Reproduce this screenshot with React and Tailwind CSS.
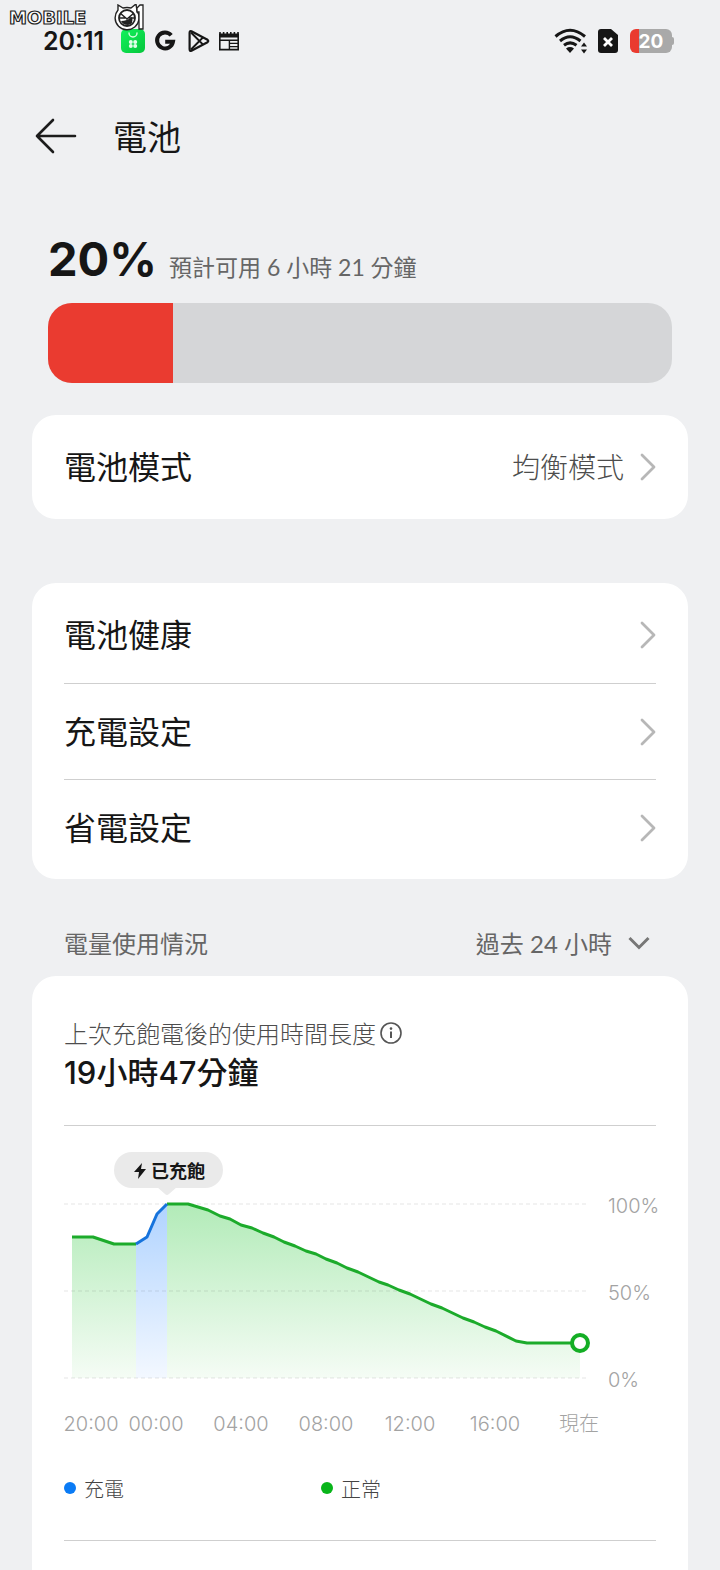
import React from 'react';

const settingsRows = ['電池健康', '充電設定', '省電設定'];

const normalBefore = [[8, 111], [29, 111], [50, 118], [72, 118]];
const charging = [[72, 118], [83, 111], [93, 88], [103, 78]];
const normalAfter = [
  [103, 78], [124, 78], [144, 84], [156, 90], [166, 93], [177, 99], [188, 102], [199, 107],
  [210, 111], [220, 116], [231, 120], [242, 125], [252, 128], [262, 133], [273, 137], [283, 142],
  [294, 146], [315, 156], [324, 159], [335, 164], [346, 168], [367, 178], [378, 182], [399, 192],
  [410, 196], [421, 201], [432, 205], [452, 215], [463, 217], [516, 217],
];

const levels = [
  { label: '100%', y: 78 },
  { label: '50%', y: 165 },
  { label: '0%', y: 252 },
];

const times = [
  { label: '20:00', x: 27 },
  { label: '00:00', x: 92 },
  { label: '04:00', x: 177 },
  { label: '08:00', x: 262 },
  { label: '12:00', x: 346 },
  { label: '16:00', x: 431 },
  { label: '現在', x: 515 },
];

const toLine = (points) => points.map((p) => p.join(',')).join(' ');
const toArea = (points) =>
  `${points[0][0]},252 ${toLine(points)} ${points[points.length - 1][0]},252`;

const Watermark = () => (
  <svg className="absolute left-2 top-1 w-[138px] h-7" viewBox="0 0 138 28">
    <text x="1" y="20" fontSize="18" fontWeight="700" fontFamily="DejaVu Sans" fill="#fff" stroke="#222" strokeWidth="1.2">
      MOBILE
    </text>
    {/* Cat face used as the zero */}
    <path d="M110 6L110 1L115 4Q119 3 123 4L128 0L129 7A12 12 0 1 1 110 6Z" fill="#fff" stroke="#222" strokeWidth="1.4" />
    <circle cx="119" cy="14" r="8" fill="#fff" stroke="#222" strokeWidth="1.8" />
    <path d="M112 9L119 15L126 9M112 14L117 14M121 14L126 14" fill="none" stroke="#222" strokeWidth="1.5" />
    <path d="M113 17Q119 17 124 13Q126 20 120 21Q115 21 113 17Z" fill="#222" />
    <path d="M129 4L132 1H135V25H131V8H129Z" fill="#fff" stroke="#222" strokeWidth="1.3" />
  </svg>
);

const StatusBar = () => (
  <div className="pt-6 h-[58px] pl-[11px] pr-[14px] flex items-center justify-between">
    <div className="flex items-center">
      <span className="text-[25px] leading-none font-semibold">20:11</span>
      <svg className="ml-[17px] w-6 h-6" viewBox="0 0 24 24">
        <defs>
          <linearGradient id="app" x1="0" y1="0" x2="1" y2="1">
            <stop offset="0" stopColor="#12f25c" />
            <stop offset="1" stopColor="#06c63c" />
          </linearGradient>
        </defs>
        <rect width="24" height="24" rx="5" fill="url(#app)" />
        <path d="M8 4a4 4 0 0 0 8 0" fill="none" stroke="#d4ffe0" strokeWidth="1.4" strokeLinecap="round" />
        <g fill="#e2ffea">
          <circle cx="9.8" cy="13" r="2" />
          <circle cx="14.2" cy="13" r="2" />
          <circle cx="9.8" cy="17" r="2" />
          <circle cx="14.2" cy="17" r="2" />
        </g>
      </svg>
      <svg className="ml-[9px] w-[22px] h-[22px]" viewBox="0 0 22 22" fill="none" stroke="#161616" strokeWidth="4">
        <path d="M17.2 5.2A8 8 0 1 0 19 11.7H11.2" />
      </svg>
      <svg className="ml-3 w-[22px] h-6" viewBox="0 0 22 24" fill="none" stroke="#161616" strokeWidth="2.2" strokeLinejoin="round">
        <path d="M3.4 2.2Q1.6 1.6 1.6 4V20Q1.6 22.4 3.4 21.8L19.5 13.2Q21 12 19.5 10.8Z" />
        <path d="M3 3.5L14.8 15.4M3 20.5L14.8 8.6" strokeWidth="2" />
      </svg>
      <svg className="ml-2 w-[22px] h-[22px]" viewBox="0 0 22 22" fill="none" stroke="#161616">
        <path d="M1.8 4V19.6H20.2V4" strokeWidth="1.6" />
        <path d="M1 5.5H21" strokeWidth="4" />
        <path d="M2 2V4M5.6 2V4M9.2 2V4M12.8 2V4M16.4 2V4M20 2V4" strokeWidth="1.6" />
        <path d="M2 10.2H20M12 13.4H20M12 16.6H20" strokeWidth="1.4" />
        <path d="M11.4 10V19" strokeWidth="1.4" />
      </svg>
    </div>
    <div className="flex items-center">
      <svg className="w-[34px] h-[26px]" viewBox="0 0 34 26" fill="none" stroke="#161616" strokeWidth="3">
        <path d="M1.5 8.5Q16 -4 31 8.5" />
        <path d="M6 13Q16 4.5 26.5 13" />
        <path d="M10 17.2Q16 12.5 22.5 17.2" />
        <path d="M12 20.5Q16 17.6 20 20.5L16 25Z" fill="#161616" stroke="none" />
        <path d="M27 18.5L30 14.5L33 18.5ZM27 21.5L30 25.5L33 21.5Z" fill="#161616" stroke="none" />
      </svg>
      <svg className="ml-[10px] w-5 h-6" viewBox="0 0 20 24">
        <path d="M3 0H13L20 6V21Q20 24 17 24H3Q0 24 0 21V3Q0 0 3 0Z" fill="#161616" />
        <path d="M6 9L14 17M14 9L6 17" stroke="#fff" strokeWidth="2.8" />
      </svg>
      <div className="ml-3 flex items-center">
        <div className="w-[42px] h-6 rounded-md overflow-hidden bg-[linear-gradient(90deg,#ea3b30_9px,#a9a9a9_9px)] flex items-center justify-center">
          <span className="text-[19px] leading-none font-bold text-white">20</span>
        </div>
        <div className="w-0.5 h-2 rounded-r-sm bg-[#a9a9a9]" />
      </div>
    </div>
  </div>
);

const Chevron = () => (
  <svg className="w-4 h-7 shrink-0" viewBox="0 0 16 28" fill="none" stroke="#b7b7b7" strokeWidth="2.8" strokeLinecap="round" strokeLinejoin="round">
    <path d="M2 2L14 14L2 26" />
  </svg>
);

const SettingRow = ({ label, value }) => (
  <button type="button" className="w-full h-24 flex items-center justify-between text-left border-[#cfcfcf] not-first:border-t">
    <span className="pt-0.5 text-[32px] leading-10">{label}</span>
    <span className="flex items-center gap-4">
      {value && <span className="pt-0.5 text-[28px] leading-9 font-light text-[#4d4d4d]">{value}</span>}
      <Chevron />
    </span>
  </button>
);

const BatteryChart = () => (
  <svg className="w-full h-auto overflow-visible" viewBox="0 0 592 314" fill="none">
    <defs>
      <linearGradient id="green" gradientUnits="userSpaceOnUse" x1="0" y1="78" x2="0" y2="252">
        <stop offset="0" stopColor="#b2ebb8" />
        <stop offset="1" stopColor="#f5fcf5" />
      </linearGradient>
      <linearGradient id="blue" gradientUnits="userSpaceOnUse" x1="0" y1="78" x2="0" y2="252">
        <stop offset="0" stopColor="#b0d3ff" />
        <stop offset="1" stopColor="#f3f8ff" />
      </linearGradient>
    </defs>

    <polygon points={toArea(normalBefore)} fill="url(#green)" />
    <polygon points={toArea(normalAfter)} fill="url(#green)" />
    <polygon points={toArea(charging)} fill="url(#blue)" />

    {levels.map(({ label, y }) => (
      <g key={label}>
        <path d={`M0 ${y}H523`} stroke="#000" strokeOpacity="0.07" strokeWidth="1.5" strokeDasharray="4 3" />
        <text x="544" y={y + 9} fontSize="20" fontWeight="300" fill="#a3a3a3">{label}</text>
      </g>
    ))}

    <g strokeWidth="3" strokeLinejoin="round">
      <polyline points={toLine(normalBefore)} stroke="#1cab2b" />
      <polyline points={toLine(normalAfter)} stroke="#1cab2b" />
      <polyline points={toLine(charging)} stroke="#1673dc" />
    </g>
    <circle cx="516" cy="217" r="8" fill="#fff" stroke="#14ae25" strokeWidth="4" />

    {/* Fully charged bubble */}
    <rect x="50" y="26" width="109" height="36" rx="18" fill="#eaeaea" />
    <path d="M93 61L101 68Q103 70 105 68L113 61Z" fill="#eaeaea" />
    <path d="M78 37L70 46H75L74 53L82 43H77Z" fill="#161616" />
    <text x="87" y="52" fontSize="18" fontWeight="700" fill="#161616">已充飽</text>

    {times.map(({ label, x }) => (
      <text key={label} x={x} y="305" fontSize="20" fontWeight="300" textAnchor="middle" fill="#a3a3a3">{label}</text>
    ))}
  </svg>
);

const App = () => {
  return (
    <div className="relative min-h-screen flex flex-col px-8 bg-[#eff0f2] text-[#161616] font-['Inter','Noto_Sans_CJK_TC',sans-serif]">
      <StatusBar />
      <Watermark />

      <header className="mt-12 h-[60px] flex items-center gap-9">
        <button type="button" aria-label="返回" className="ml-[3px]">
          <svg className="w-[42px] h-9" viewBox="0 0 42 36" fill="none" stroke="#1c1c1c" strokeWidth="2.6" strokeLinecap="round" strokeLinejoin="round">
            <path d="M18 2L2 18L18 34M2 18H40" />
          </svg>
        </button>
        <h1 className="pt-1 text-[34px] leading-10">電池</h1>
      </header>

      {/* Charge level */}
      <section className="mt-[69px] px-4">
        <div className="h-12 flex items-baseline gap-3">
          <span className="text-[47px] leading-12 font-bold">20%</span>
          <span className="text-[23px] leading-none text-[#666] font-['Lato','Noto_Sans_CJK_TC',sans-serif]">預計可用 6 小時 21 分鐘</span>
        </div>
        <div className="mt-5 h-20 rounded-3xl overflow-hidden bg-[#d5d6d8]">
          <div className="h-full w-1/5 bg-[#ea3b30]" />
        </div>
      </section>

      <section className="mt-8 px-8 py-1 rounded-3xl bg-white">
        <SettingRow label="電池模式" value="均衡模式" />
      </section>

      <section className="mt-16 px-8 py-1 rounded-3xl bg-white">
        {settingsRows.map((label) => (
          <SettingRow key={label} label={label} />
        ))}
      </section>

      {/* Usage */}
      <div className="mt-12 mb-[17px] h-8 pl-8 pr-[38px] flex items-center justify-between text-2xl leading-8 text-[#666]">
        <h2 className="pt-1">電量使用情況</h2>
        <label className="flex items-center gap-4">
          <select aria-label="時間範圍" className="pt-0.5 appearance-none bg-transparent field-sizing-content leading-8 outline-none font-['Lato','Noto_Sans_CJK_TC',sans-serif]">
            <option>過去 24 小時</option>
          </select>
          <svg className="w-[22px] h-4" viewBox="0 0 22 16" fill="none" stroke="#777" strokeWidth="3">
            <path d="M1.5 3L11 12.5L20.5 3" />
          </svg>
        </label>
      </div>

      <section className="flex-1 px-8 pt-[41px] pb-7 rounded-t-3xl bg-white">
        <div className="h-8 flex items-center gap-1 text-2xl leading-8 text-[#4d4d4d]">
          <span className="pt-1 font-light">上次充飽電後的使用時間長度</span>
          <button type="button" aria-label="說明">
            <svg className="w-[22px] h-[22px]" viewBox="0 0 22 22" fill="none" stroke="#555" strokeWidth="1.6">
              <circle cx="11" cy="11" r="10" />
              <path d="M11 9.5V16" strokeWidth="2" />
              <circle cx="11" cy="6.6" r="1.3" fill="#555" stroke="none" />
            </svg>
          </button>
        </div>
        <p className="text-[31px] leading-12 font-medium">19小時47分鐘</p>
        <hr className="mt-7 border-[#cfcfcf]" />

        <BatteryChart />

        <ul className="mt-[30px] h-8 grid grid-cols-[257px_1fr] items-center text-xl leading-8 font-light text-[#444]">
          <li className="flex items-center gap-2">
            <span className="w-3 h-3 rounded-full bg-[#0a7bf5]" />
            <span className="pt-1">充電</span>
          </li>
          <li className="flex items-center gap-2">
            <span className="w-3 h-3 rounded-full bg-[#08b51a]" />
            <span className="pt-1">正常</span>
          </li>
        </ul>
        <hr className="mt-[38px] border-[#cfcfcf]" />
      </section>
    </div>
  );
};

export default App;
